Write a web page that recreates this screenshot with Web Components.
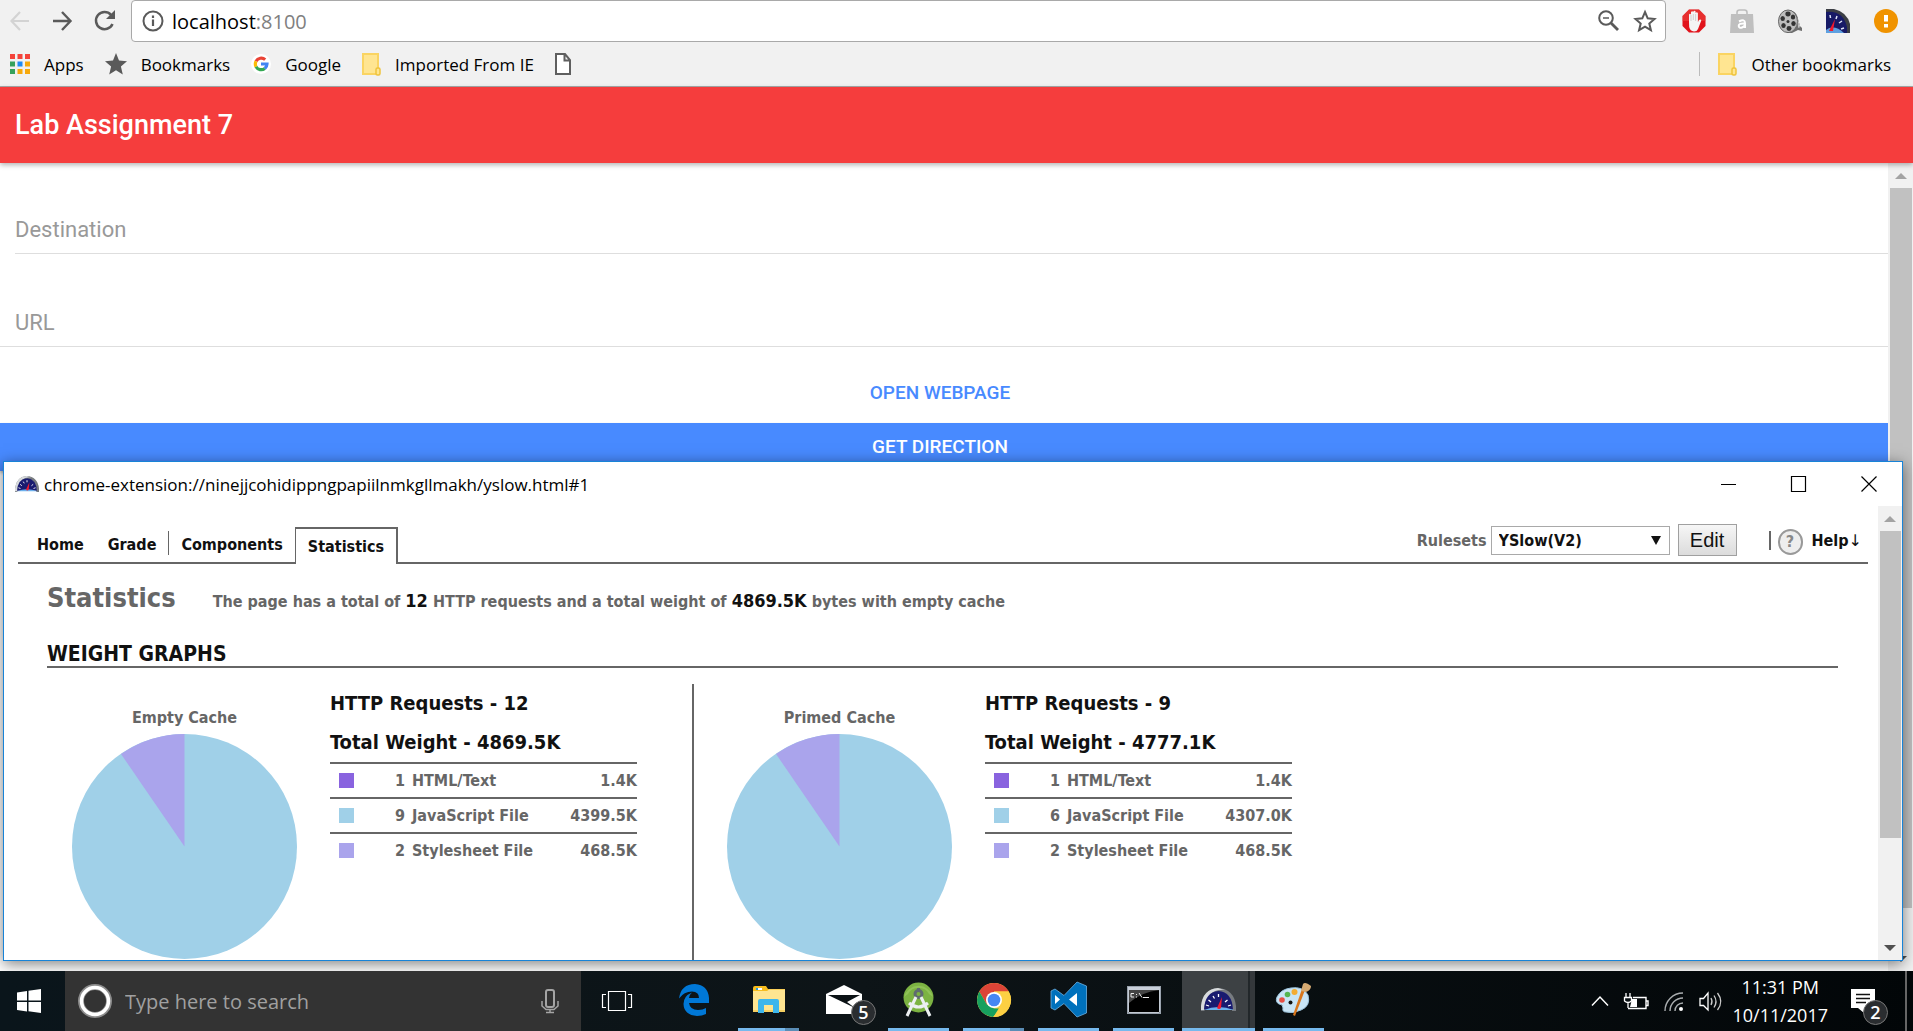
<!DOCTYPE html>
<html lang="en">
<head>
<meta charset="utf-8">
<title>Lab Assignment 7</title>
<style>
html,body{margin:0;height:100%}
body{overflow:hidden;font-family:"Open Sans","Noto Sans",sans-serif;font-size:18px;color:#000}
</style>
</head>
<body>
<desk-top>
  <chrome-browser>
    <nav-bar></nav-bar>
    <bookmarks-bar></bookmarks-bar>
    <lab-page></lab-page>
  </chrome-browser>
  <popup-window heading="chrome-extension://ninejjcohidippngpapiilnmkgllmakh/yslow.html#1">
    <yslow-report>
      <cache-panel label="Empty Cache" requests="12" weight="4869.5K" rows="1,HTML/Text,1.4K;9,JavaScript File,4399.5K;2,Stylesheet File,468.5K"></cache-panel>
      <cache-panel label="Primed Cache" requests="9" weight="4777.1K" rows="1,HTML/Text,1.4K;6,JavaScript File,4307.0K;2,Stylesheet File,468.5K"></cache-panel>
    </yslow-report>
  </popup-window>
  <task-bar slot="taskbar"></task-bar>
</desk-top>
<script>
const ICONS = {
back:[20,20,'<path d="M19 10H2M10 1L1.500 10L10 19" fill="none" stroke="#d3d3d3" stroke-width="2.200"/>'],
forward:[20,20,'<path d="M1 10H18M10 1L18.500 10L10 19" fill="none" stroke="#5a5a5a" stroke-width="2.400"/>'],
reload:[22,22,'<path d="M18.500 14A8.600 8.600 0 1 1 17 4.800" fill="none" stroke="#5a5a5a" stroke-width="2.500"/><path d="M21 0V9H12Z" fill="#5a5a5a"/>'],
info:[22,22,'<circle cx="11" cy="11" r="9.500" fill="none" stroke="#5a5a5a" stroke-width="2"/><path d="M11 9.500V16M11 5.500V8" stroke="#5a5a5a" stroke-width="2.200"/>'],
zoomout:[21,21,'<circle cx="8" cy="8" r="6.800" fill="none" stroke="#5a5a5a" stroke-width="2"/><path d="M5 8H11" stroke="#5a5a5a" stroke-width="1.500"/><path d="M13 13L20 20" stroke="#5a5a5a" stroke-width="2.800"/>'],
star:[22,22,'<path d="M11 2L13.700 8.300L20.500 9L15.300 13.500L16.900 20.200L11 16.600L5.100 20.200L6.700 13.500L1.500 9L8.300 8.300Z" fill="none" stroke="#5a5a5a" stroke-width="2"/>'],
starfull:[22,22,'<path d="M11 0L14 7.500L22 8.200L15.900 13.500L17.800 21.500L11 17.200L4.200 21.500L6.100 13.500L0 8.200L8 7.500Z" fill="#5a5a5a"/>'],
adblock:[24,24,'<path d="M7 .5H17L23.500 7V17L17 23.500H7L.5 17V7Z" fill="#e1131b"/><path d="M7 .5H17L23.500 7V12H.5V7Z" fill="#ee4c43" opacity=".5"/><path d="M7 13V5.500Q8 4 9 5.500V11V3Q10.200 1.500 11.300 3V10V2.500Q12.500 1 13.600 2.500V10.500V4Q14.800 2.600 15.900 4V13L17 11Q18.800 10 19.300 11.500L16 20Q15 22.500 12 22.500Q8 22 7.200 18Z" fill="#f4f4f4"/><path d="M9 6V12M11.300 5V11M13.600 5V12" stroke="#bbb" stroke-width=".6"/>'],
bag:[24,24,'<path d="M7 8V3.500Q7 1 9.500 1H14.500Q17 1 17 3.500V8" fill="none" stroke="#bdbdbd" stroke-width="1.600"/><path d="M1 5H23L24 24H0Z" fill="#bfbfbf"/><path d="M9 12.500Q15 9.500 15 14V19M15 14.500Q8.500 14 8.700 17Q9 19.500 12 18.500Q15 17.500 15 15" fill="none" stroke="#fff" stroke-width="2"/>'],
reel:[24,24,'<path d="M9 1Q19 1 20 10L22 17L24 19V22L20 21L14 24Q11 24 9 23Z" fill="#6e6e6e"/><path d="M17.500 5L21 19M19 9L22 18" stroke="#ccc" stroke-width="1"/><ellipse cx="10" cy="12.300" rx="9.500" ry="11.300" fill="#bdbdbd" stroke="#666"/><g fill="#333"><ellipse cx="10" cy="5" rx="2.600" ry="2.400"/><ellipse cx="4.700" cy="9.500" rx="2.200" ry="2.500"/><ellipse cx="5.500" cy="16.500" rx="2.200" ry="2.500"/><ellipse cx="11" cy="19.500" rx="2.500" ry="2.400"/><ellipse cx="15.500" cy="14.500" rx="2.200" ry="2.500"/><ellipse cx="15" cy="8" rx="2.200" ry="2.500"/><circle cx="10" cy="12.500" r="1.500"/></g>'],
yslowcorner:[24,24,'<path d="M0 0H8Q21 3 24 15V24H0Z" fill="#3c3f45"/><path d="M0 3Q17 1 21 18V24H0Z" fill="#171a66"/><path d="M0 21Q8 15 18 24H0Z" fill="#5fa0e0"/><path d="M3 22L9 10L7 22Z" fill="#f0182c"/><path d="M4 6L4.500 9M11 7L10 10M16 12L13 14M18 19L15 20" stroke="#dfe4f5" stroke-width="1.500"/>'],
warn:[24,24,'<circle cx="12" cy="12" r="12" fill="#f09300"/><path d="M12 6V12.500M12 15V18.500" stroke="#fff" stroke-width="4"/>'],
apps:[20,20,'<path d="M0 0h5v5H0zM7.500 0h5v5h-5zM15 0h5v5h-5z" fill="#f4433a"/><path d="M0 7.500h5v5H0zM0 15h5v5H0z" fill="#36a15c"/><path d="M7.500 7.500h5v5h-5z" fill="#1f8bf5"/><path d="M15 7.500h5v5h-5zM7.500 15h5v5h-5zM15 15h5v5h-5z" fill="#f7a90c"/>'],
google:[20,20,'<circle cx="10" cy="10" r="10" fill="#fff"/><g fill="none" stroke-width="3.200"><path d="M5 7.300A6 6 0 0 1 14.200 5.600" stroke="#ea4335"/><path d="M5 7.300A6 6 0 0 0 5 12.700" stroke="#fbbc05"/><path d="M5 12.700A6 6 0 0 0 13.800 14.500" stroke="#34a853"/><path d="M10 10H16A6 6 0 0 1 13.800 14.500" stroke="#4285f4"/></g>'],
folder:[19,23,'<path d="M1 1H16V21H1Z" fill="#ffe591" stroke="#fad462" stroke-width="2"/><rect x="14" y="15" width="4" height="7" rx="1.500" fill="#ffe591" stroke="#efc33c" stroke-width="1.500"/>'],
page:[16,22,'<path d="M1 1H10L15 7V21H1ZM9.500 1V7.500H15" fill="#fff" stroke="#5f5f5f" stroke-width="2"/>'],
up:[12,6,'<path d="M6 0L12 6H0Z" fill="#a3a3a3"/>'],
down:[12,6,'<path d="M0 0H12L6 6Z" fill="#505050"/>'],
yslow:[35,23,'<path d="M0 23V18Q2 1 17 0Q33 1 35 18V23H31V18Q29 5 17 4Q6 5 3.500 18V23Z" fill="#777b80"/><path d="M0 22V18Q2 1 17 0L24 2Q8 0 3.500 18V22Z" fill="#d8dbdd"/><path d="M3 21.500Q4 4 17.500 3Q31 4 32 21.500Z" fill="#191b70"/><path d="M3 22Q17 16 33 22Z" fill="#6db2ee"/><path d="M16 20L21 9L20 20Q18 22 16 20Z" fill="#f01b32"/><path d="M5 17L8 18M7.500 12L10 14M12 8L13.500 10.500M17.500 6V9M26.500 12L24 14M30 17L27 18" stroke="#fff" stroke-width="1.300"/>'],
min:[16,16,'<path d="M0 8.500H15" stroke="#000"/>'],
max:[16,16,'<path d="M.5.500H14.500V15.500H.5Z" fill="none" stroke="#000" stroke-width="1.200"/>'],
close:[16,16,'<path d="M.5.500L15.500 15.500M15.500.500L.5 15.500" stroke="#000" stroke-width="1.200"/>'],
windows:[24,24,'<path d="M0 3.500L10 2V11.500H0ZM11.500 1.800L24 0V11.500H11.500ZM0 13H10V22.500L0 21ZM11.500 13H24V24L11.500 22.300Z" fill="#fff"/>'],
cortana:[34,34,'<circle cx="17" cy="17" r="14" fill="none" stroke="#8c8c8c" stroke-width="6"/><circle cx="17" cy="17" r="13.500" fill="none" stroke="#fff" stroke-width="3.500"/>'],
mic:[18,24,'<rect x="5" y="1" width="8" height="17" rx="2" fill="none" stroke="#a5a5a5" stroke-width="2"/><path d="M1 12V17L5 20.500H13L17 17V12M9 20.500V23M5 23.500H13" fill="none" stroke="#a5a5a5" stroke-width="1.500"/>'],
taskview:[30,20,'<path d="M6.500.500H23.500V19.500H6.500ZM4 3.500H.5V16.500H4M26 3.500H29.500V16.500H26" fill="none" stroke="#fff" stroke-width="1.200"/>'],
edge:[30,32,'<path d="M0 14.500Q2 0 16 0Q29 1 30 14V19H10Q11 26 19 26Q24 26 27 24V30Q23 32 18 32Q5 31 4.500 20Q4.500 12 13 8.500Q10 11 10 14H20Q20 7.500 13 7.500Q5 7.500 0 14.500Z" fill="#0078d7"/>'],
explorer:[32,27,'<path d="M0 2Q0 0 2 0H13L15 3H32V8H0Z" fill="#f7bd20"/><path d="M3 3H9" stroke="#fff" stroke-width="2"/><path d="M3 3H5" stroke="#2a9de0" stroke-width="2"/><path d="M0 5H14L16 3.500H32V25H0Z" fill="#ffe591"/><path d="M0 24H32V26H0Z" fill="#f5cf62"/><path d="M5 27V15Q5 13 7 13H24Q26 13 26 15V27H20V19H11V27Z" fill="#3db6ec"/>'],
mail:[36,29,'<path d="M0 9L18 0L36 9V29H0Z" fill="#fff"/><path d="M2 10H34L21 17L29 23Z" fill="#0b1215"/>'],
android:[31,35,'<circle cx="15.500" cy="15.500" r="15" fill="#7cb342"/><path d="M5 12A12 12 0 0 1 26 12L30 15A15 15 0 0 0 1 15Z" fill="#9ccc65" opacity=".6"/><circle cx="15.500" cy="12" r="3.500" fill="none" stroke="#5f6b70" stroke-width="3"/><path d="M15.500 6V9" stroke="#5f6b70" stroke-width="3"/><path d="M13 15L4 34M18 15L27 34M6 21Q15.500 29 25 21" stroke="#eceff1" stroke-width="3" fill="none"/>'],
chrome:[34,34,'<circle cx="17" cy="17" r="17" fill="#fdd043"/><path d="M17 8.500H31.700A17 17 0 0 0 2.300 8.500L9.700 21.200L17 17Z" fill="#dc4437"/><path d="M2.300 8.500L9.700 21.200L17 25.500H23.500L16 34A17 17 0 0 1 2.300 8.500Z" fill="#17a05e"/><path d="M24.300 21.200L16.500 34A17 17 0 0 0 31.700 8.500H17Z" fill="#fdd043"/><circle cx="17" cy="17" r="8" fill="#fff"/><circle cx="17" cy="17" r="6.300" fill="#4787f3"/>'],
vscode:[36,35,'<path d="M26 0L35.500 4V31L26 35L13 21.500L4 28L0 26V9L4 7L13 13.500Z" fill="#0071bc" stroke="#6cb0e2" stroke-width=".8"/><path d="M26 11V24L18 17.500ZM4 13V22L9 17.500Z" fill="#fff"/>'],
cmd:[34,28,'<rect x=".5" y=".5" width="33" height="27" fill="#000" stroke="#9aa3ae"/><path d="M1 1H33V4H1Z" fill="#c9d0da"/><path d="M2 4H33Q14 6 2 17Z" fill="#444"/><path d="M7 7.500H4V11H7M9.500 8V9M9.500 10.500V11.500M12 7L15 11.500M16 11.500H22" stroke="#eee" fill="none"/><path d="M1.500 4V26.500H32.500V4" stroke="#c3cad3" fill="none"/>'],
paint:[36,35,'<path d="M15 6Q27 4 32 13Q35 24 25 28Q17 32 10 30Q6 30 7 26Q7 22 3 22Q-1 20 1 15Q5 7 15 6Z" fill="#c9e4f5" stroke="#9cc3dc"/><circle cx="6" cy="18" r="2.800" fill="#e65045"/><circle cx="11.500" cy="12.500" r="2.800" fill="#56b550"/><circle cx="18.500" cy="10" r="3" fill="#f4ac32"/><circle cx="14.500" cy="20.500" r="2" fill="#111"/><path d="M29 8L19 34L17 33L26 7Z" fill="#d9771d"/><path d="M25 9L27 2Q29-1 35 4Q35 8 30 10Z" fill="#d6aa72"/>'],
chevron:[18,10,'<path d="M1 9.500L9 1L17 9.500" fill="none" stroke="#fff" stroke-width="1.500"/>'],
battery:[25,17,'<path d="M9 4.500H22V15.500H4M22 8H24V12.500H22" fill="none" stroke="#fff" stroke-width="1.400"/><path d="M8 6H13V14H6Z" fill="#fff"/><path d="M2 0V4M6 0V4M.5 4.500H7.500V8Q4 11 .5 8ZM4 10V15" stroke="#fff" stroke-width="1.300" fill="#0a1114"/>'],
wifi:[20,19,'<g fill="none" stroke="#a9adaf" stroke-width="1.400"><path d="M1 19A18 18 0 0 1 19 1"/><path d="M6 19A13 13 0 0 1 19 6"/><path d="M11 19A8 8 0 0 1 19 11"/></g><circle cx="17" cy="17" r="2" fill="#fff"/>'],
volume:[23,19,'<path d="M1 6.500H4.500L9 1V18L4.500 13.500H1Z" fill="none" stroke="#fff" stroke-width="1.300"/><path d="M12 6Q14 9.500 12 13M15 3.500Q19 9.500 15 15.500M18.500 1Q25 9.500 18.500 18" fill="none" stroke="#ccc" stroke-width="1.300"/>'],
note:[24,24,'<path d="M0 0H24V19H13V24L7 19H0Z" fill="#fff"/><path d="M5 5.500H19M5 9.500H19M5 13.500H15" stroke="#111" stroke-width="1.300"/>']
};
function define(name, html, init){
  const t = document.createElement('template');
  t.innerHTML = html;
  customElements.define(name, class extends HTMLElement{
    connectedCallback(){
      if(this.shadowRoot) return;
      const root = this.attachShadow({mode:'open'});
      root.append(t.content.cloneNode(true));
      if(init) init(this, root);
    }
  });
}
define('ui-icon','<style>:host{display:block;flex:none}svg{display:block;overflow:visible}</style>',(el,root)=>{
  const [w,h,body] = ICONS[el.getAttribute('name')];
  const W = +(el.getAttribute('width')||w), H = Math.round(h*W/w);
  const box = document.createElement('template');
  box.innerHTML = `<svg width="${W}" height="${H}" viewBox="0 0 ${w} ${h}" aria-hidden="true">${body}</svg>`;
  root.append(box.content);
});
define('scroll-bar',`<style>
:host{display:flex;flex-direction:column;flex:none;width:24px;background:#f1f1f1;box-sizing:border-box}
ui-icon{align-self:center;margin:10px 0 9px}
ui-icon.d{margin:10px 0 9px}
.track{flex:1;min-height:0;padding:0 1px 0 2px}
.thumb{background:#c1c1c1;height:var(--thumb,75%)}
</style><ui-icon name="up"></ui-icon><div class="track"><div class="thumb"></div></div><ui-icon class="d" name="down"></ui-icon>`);
define('desk-top',`<style>
:host{display:flex;flex-direction:column;height:100vh;position:relative;overflow:hidden}
main{flex:1;min-height:0;display:flex;flex-direction:column;position:relative;overflow:hidden}
</style><main><slot></slot></main><slot name="taskbar"></slot>`);
define('chrome-browser',`<style>:host{display:flex;flex-direction:column;flex:1;min-height:0;background:#fff}</style><slot></slot>`);
define('nav-bar',`<style>
:host{display:flex;align-items:flex-start;background:#f1f1f1;height:42px;padding:0 15px 0 10px}
.nav{display:flex;align-items:center;gap:22px;height:42px;margin-right:15px}
button{all:unset;display:block}
.omni{flex:1;display:flex;align-items:center;box-sizing:border-box;height:42px;border:1px solid #a9a9a9;border-radius:4px;background:#fff;padding:0 9px 0 10px;gap:8px;font-size:20px}
.url{flex:1}.url span{color:#808080}
.tools{display:flex;gap:15px}
.ext{display:flex;align-items:center;gap:24px;height:42px;margin-left:16px}
</style>
<div class="nav"><button aria-label="Back"><ui-icon name="back"></ui-icon></button><button aria-label="Forward"><ui-icon name="forward"></ui-icon></button><button aria-label="Reload"><ui-icon name="reload"></ui-icon></button></div>
<div class="omni"><ui-icon name="info"></ui-icon><div class="url">localhost<span>:8100</span></div><div class="tools"><ui-icon name="zoomout"></ui-icon><ui-icon name="star"></ui-icon></div></div>
<div class="ext"><ui-icon name="adblock"></ui-icon><ui-icon name="bag"></ui-icon><ui-icon name="reel"></ui-icon><ui-icon name="yslowcorner"></ui-icon><ui-icon name="warn"></ui-icon></div>`);
define('bookmarks-bar',`<style>
:host{display:flex;align-items:center;box-sizing:border-box;height:45px;background:#f1f1f1;border-bottom:1px solid #a9a9a9;padding:0 22px 0 10px;gap:21px;font-size:17px}
a{display:flex;align-items:center;gap:14px;color:inherit;text-decoration:none}
.sp{flex:1}.sep{width:1px;height:24px;background:#bbb;margin-right:-3px}
</style>
<a href="#"><ui-icon name="apps"></ui-icon>Apps</a><a href="#"><ui-icon name="starfull"></ui-icon>Bookmarks</a><a href="#"><ui-icon name="google"></ui-icon>Google</a><a href="#"><ui-icon name="folder"></ui-icon>Imported From IE</a><a href="#" aria-label="Page"><ui-icon name="page"></ui-icon></a><span class="sp"></span><span class="sep"></span><a href="#"><ui-icon name="folder"></ui-icon>Other bookmarks</a>`);
define('lab-page',`<style>
:host{display:flex;flex-direction:column;flex:1;min-height:0;font-family:Roboto,sans-serif}
header{background:#f53d3d;color:#fff;height:76px;flex:none;display:flex;align-items:center;padding:0 15px;box-shadow:0 2px 5px rgba(0,0,0,.3);position:relative}
h1{margin:0;font-size:27px;font-weight:500}
.body{flex:1;display:flex;min-height:0}
form{flex:1;display:flex;flex-direction:column}
.f{height:93px;box-sizing:border-box;padding:0 0 0 15px}
.f:first-child{height:91px}
.f label{display:flex;align-items:flex-end;height:100%;box-sizing:border-box;border-bottom:1px solid #dedede}
.f.full{padding-left:0}.f.full label{padding-left:15px}
input{all:unset;flex:1;font-size:22px;line-height:26px;padding-bottom:10px}
input::placeholder{color:#999;opacity:1}
button{all:unset;text-align:center;font-size:19px;font-weight:500;height:48px;line-height:46px;padding-right:8px}
.open{color:#488aff;margin:22px 0 6px}
.dir{background:#488aff;color:#fff;box-shadow:0 2px 3px rgba(0,0,0,.3)}
scroll-bar{width:25px;--thumb:95%}
</style>
<header><h1>Lab Assignment 7</h1></header>
<div class="body"><form><div class="f"><label><input aria-label="Destination" placeholder="Destination"></label></div><div class="f full"><label><input aria-label="URL" placeholder="URL"></label></div><button type="button" class="open">OPEN WEBPAGE</button><button type="button" class="dir">GET DIRECTION</button></form><scroll-bar></scroll-bar></div>`);
define('popup-window',`<style>
:host{position:absolute;left:3px;right:10px;top:461px;bottom:10px;box-sizing:border-box;border:1px solid #1883d7;background:#fff;box-shadow:0 3px 14px rgba(0,0,0,.5);display:flex;flex-direction:column}
header{height:44px;flex:none;display:flex;align-items:center;padding:0 25px 0 11px;font-size:17px}
.t{flex:1;margin-left:5px}
.w{display:flex;gap:54px}button{all:unset}
.c{flex:1;min-height:0;display:flex}.p{flex:1;min-width:0;overflow:hidden}
scroll-bar{--thumb:76%}
</style>
<header><ui-icon name="yslow" width="24"></ui-icon><span class="t"></span><div class="w"><button aria-label="Minimize"><ui-icon name="min"></ui-icon></button><button aria-label="Maximize"><ui-icon name="max"></ui-icon></button><button aria-label="Close"><ui-icon name="close"></ui-icon></button></div></header>
<div class="c"><div class="p"><slot></slot></div><scroll-bar></scroll-bar></div>`,(el,root)=>{root.querySelector('.t').textContent=el.getAttribute('heading')});
define('yslow-report',`<style>
:host{display:block;font-family:"DejaVu Sans Condensed","DejaVu Sans",sans-serif;font-weight:700;font-size:16px;color:#666;padding:19px 10px 0 14px}
nav{display:flex;align-items:flex-end;border-bottom:2px solid #666;height:37px;color:#111}
a{color:inherit;text-decoration:none}
.tab{box-sizing:border-box;height:37px;line-height:36px;padding:2px 12px 0}
.home{padding-left:19px}
.sep{width:1px;height:24px;background:#666;margin-bottom:7px}
.on{border:2px solid #666;border-left-width:1px;border-bottom:0;background:#fff;margin-bottom:-2px;padding-top:0}
.r{margin-left:auto;display:flex;align-items:center;height:34px;padding-bottom:5px}
label{color:#666;display:flex;align-items:center;gap:4px}
.sel{display:flex;align-items:center;position:relative}
select{appearance:none;font:inherit;color:#111;width:179px;height:29px;border:1px solid #a9a9a9;border-radius:0;background:#fff;padding:0 7px;margin:0}
.sel svg{position:absolute;right:9px;pointer-events:none}
.edit{box-sizing:border-box;width:59px;height:32px;margin:0 32px 0 8px;padding:0;border:1px solid #a0a0a0;background:linear-gradient(#f6f6f6,#dcdcdc);font:20px "Liberation Sans",sans-serif;color:#111}
.bar{width:2px;height:19px;background:#666;margin-right:7px}
.q{box-sizing:border-box;width:25px;height:26px;border:2px solid #999;border-radius:13px;background:#eee;color:#888;text-align:center;line-height:22px;margin:4px 9px 0 0}
.help{margin-right:6px}
.help span{font:16px "DejaVu Sans",sans-serif}
.b{padding:0 30px 0 29px}
.h{display:flex;align-items:baseline;gap:37px;padding-top:17px}
h2{margin:0;font-size:27px;line-height:34px}
.h b{color:#111;font-size:18px}
h3{margin:27px 0 0;font-size:21px;line-height:24px;color:#111;border-bottom:2px solid #666}
.panels{display:flex;padding-top:16px}
</style>
<nav><a class="tab home" href="#">Home</a><a class="tab" href="#">Grade</a><span class="sep"></span><a class="tab" href="#">Components</a><a class="tab on" href="#">Statistics</a>
<div class="r"><label>Rulesets<span class="sel"><select><option>YSlow(V2)</option></select><svg width="10" height="9"><path d="M0 0H10L5 9Z" fill="#111"/></svg></span></label><button class="edit">Edit</button><span class="bar"></span><span class="q">?</span><a class="help" href="#">Help<span>↓</span></a></div></nav>
<div class="b"><div class="h"><h2>Statistics</h2><span>The page has a total of <b>12</b> HTTP requests and a total weight of <b>4869.5K</b> bytes with empty cache</span></div>
<h3>WEIGHT GRAPHS</h3><div class="panels"><slot></slot></div></div>`);
define('cache-panel',`<style>
:host{display:flex;box-sizing:border-box;width:654px;height:290px;padding-left:25px}
:host(:first-child){width:647px;border-right:2px solid #666;margin-right:8px}
figure{margin:0;width:225px;text-align:center}
figcaption{margin-top:23px;line-height:22px;margin-bottom:5px}
svg{display:block}
.d{margin-left:33px;width:307px}
h4{margin:0;font-size:20px;line-height:39px;color:#111}
table{border-collapse:collapse;width:100%}
td{padding:0;height:33px;border-top:2px solid #666}
.s{width:52px}.s i{display:block;width:15px;height:15px;margin-left:9px}
.n{text-align:right;width:23px;padding-right:7px}.w{text-align:right}
</style>
<figure><figcaption></figcaption><svg width="225" height="225" viewBox="0 0 225 225"><circle cx="112.500" cy="112.500" r="112.500" fill="#a0d0e8"/><path d="M112.500 112.500V0A112.500 112.500 0 0 0 49 20Z" fill="#aaa4ec"/></svg></figure>
<div class="d"><h4 class="q"></h4><h4 class="t"></h4><table><tbody></tbody></table></div>`,(el,root)=>{
  const a = n=>el.getAttribute(n), $ = s=>root.querySelector(s);
  $('figcaption').textContent = a('label');
  $('.q').textContent = 'HTTP Requests - '+a('requests');
  $('.t').textContent = 'Total Weight - '+a('weight');
  const colors = ['#8963df','#a0d0e8','#aaa4ec'];
  $('tbody').innerHTML = a('rows').split(';').map((r,i)=>{const [n,f,w]=r.split(',');
    return `<tr><td class="s"><i style="background:${colors[i]}"></i></td><td class="n">${n}</td><td>${f}</td><td class="w">${w}</td></tr>`}).join('');
});
define('task-app',`<style>
:host{display:flex;box-sizing:border-box;width:61px;height:60px;align-items:center;justify-content:center;position:relative;border-bottom:3px solid transparent}
:host([open]){border-color:#76b9ed}
:host([active]){background:#3d4144;width:73px;border-bottom-color:#76b9ed}
:host([active])::after{content:"";position:absolute;right:0;top:0;bottom:0;width:7px;background:#34383b;border-left:2px solid #22272a;box-sizing:border-box}
button{all:unset}
.n{position:absolute;right:-2px;bottom:3px;box-sizing:border-box;width:25px;height:25px;border:1px solid #777;border-radius:50%;background:#2a2d30;color:#fff;font-size:18px;font-weight:600;line-height:23px;text-align:center}
.n:empty{display:none}
.m{position:absolute;right:0;bottom:-3px;width:14px;height:3px;background:#5a8db6;display:none}
:host([many]) .m{display:block}
</style><button></button><span class="n"></span><span class="m"></span>`,(el,root)=>{
  const icon = document.createElement('ui-icon'), button = root.querySelector('button');
  icon.setAttribute('name',el.getAttribute('icon'));
  button.setAttribute('aria-label',el.getAttribute('icon'));
  button.append(icon);
  root.querySelector('.n').textContent = el.getAttribute('count')||'';
});
define('task-bar',`<style>
:host{display:flex;align-items:center;flex:none;height:60px;background:linear-gradient(90deg,#0a151b,#0d1417 45%,#020608);position:relative}
button{all:unset}
.start{width:65px;height:60px;display:flex;align-items:center;justify-content:center;box-sizing:border-box;padding-right:7px}
.search{display:flex;align-items:center;width:516px;height:60px;background:#333;box-sizing:border-box;padding:0 22px 0 13px;gap:13px}
input{all:unset;flex:1;font-size:20px;line-height:28px;padding-top:2px}
input::placeholder{color:#a0a0a0;opacity:1}
.view{margin:0 32px 0 21px}
.edge-gap{flex:none}
.apps{display:flex;gap:14px;margin-left:-1px}
.apps [active]{margin:0 -6px}
.tray{margin-left:auto;display:flex;align-items:center;height:60px;color:#fff}
.tray ui-icon{margin-right:15px}
.tray .vol{margin-right:10px}
.clock{text-align:center;font-size:18px;line-height:28px;margin-right:23px}
.note{position:relative;margin-right:30px}.note ui-icon{margin:0}
.note span{position:absolute;left:12px;top:11px;box-sizing:border-box;width:25px;height:25px;border:1px solid #777;border-radius:50%;background:#2a2d30;font-size:18px;font-weight:600;line-height:23px;text-align:center}
.edge{width:2px;height:60px;background:#666;margin-right:6px}
</style>
<button class="start" aria-label="Start"><ui-icon name="windows"></ui-icon></button>
<div class="search"><ui-icon name="cortana"></ui-icon><input aria-label="Search" placeholder="Type here to search"><ui-icon name="mic"></ui-icon></div>
<button class="view" aria-label="Task view"><ui-icon name="taskview"></ui-icon></button>
<div class="apps"><task-app icon="edge"></task-app><task-app icon="explorer" open many></task-app><task-app icon="mail" count="5"></task-app><task-app icon="android" open></task-app><task-app icon="chrome" open many></task-app><task-app icon="vscode" open></task-app><task-app icon="cmd" open></task-app><task-app icon="yslow" open active></task-app><task-app icon="paint" open></task-app></div>
<div class="tray"><ui-icon name="chevron"></ui-icon><ui-icon name="battery"></ui-icon><ui-icon name="wifi"></ui-icon><ui-icon name="volume" class="vol"></ui-icon><div class="clock">11:31 PM<br>10/11/2017</div><div class="note"><ui-icon name="note"></ui-icon><span>2</span></div><div class="edge"></div></div>`);
</script>
</body>
</html>
